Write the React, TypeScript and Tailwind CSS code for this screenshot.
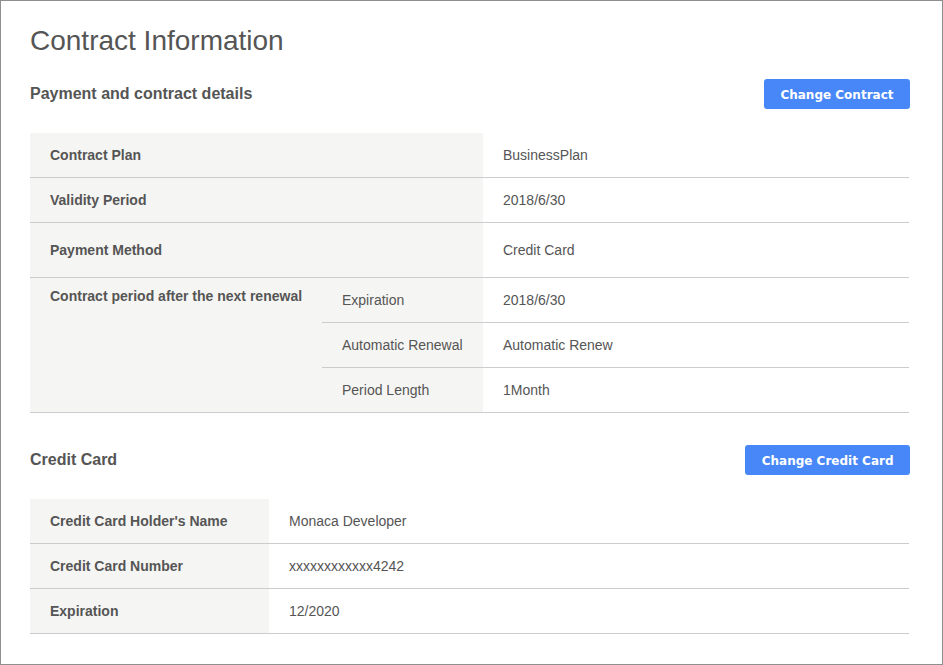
import React from 'react';

interface Item {
  label: string;
  value: string;
  tall?: boolean;
}

const contractRows: Item[] = [
  { label: 'Contract Plan', value: 'BusinessPlan' },
  { label: 'Validity Period', value: '2018/6/30' },
  { label: 'Payment Method', value: 'Credit Card', tall: true },
];

const renewalRows: Item[] = [
  { label: 'Expiration', value: '2018/6/30' },
  { label: 'Automatic Renewal', value: 'Automatic Renew' },
  { label: 'Period Length', value: '1Month' },
];

const cardRows: Item[] = [
  { label: "Credit Card Holder's Name", value: 'Monaca Developer' },
  { label: 'Credit Card Number', value: 'xxxxxxxxxxxx4242' },
  { label: 'Expiration', value: '12/2020' },
];

const SectionHeader: React.FC<{ title: string; action: string }> = ({ title, action }) => (
  <div className="flex items-center justify-between h-[30px]">
    <h2 className="text-[16px] leading-[20px] font-bold text-[#555555]">{title}</h2>
    <button className="h-[30px] px-[16.5px] pt-[2px] rounded-[3px] bg-[#4787f8] text-white text-[12px] font-bold font-['DejaVu_Sans',sans-serif]">
      {action}
    </button>
  </div>
);

const App: React.FC = () => {
  return (
    <div className="h-[665px] w-[943px] border border-[#8e8e8e] bg-white pl-[29px] pr-[32px] pt-[24px] font-['Liberation_Sans',Arial,sans-serif] text-[14px] text-[#555555] overflow-hidden">
      <h1 className="text-[28px] leading-[32px] font-normal text-[#555555]">Contract Information</h1>

      <div className="mt-[22px]">
        <SectionHeader title="Payment and contract details" action="Change Contract" />
      </div>

      {/* contract table */}
      <div className="mt-[24px] mr-[1px]">
        {contractRows.map((row) => (
          <div
            key={row.label}
            className={`flex border-b border-[#cccccc] ${row.tall ? 'h-[55px]' : 'h-[45px]'}`}
          >
            <div className="w-[453px] bg-[#f5f5f3] flex items-center pl-5 font-bold">{row.label}</div>
            <div className="flex-1 flex items-center pl-5">{row.value}</div>
          </div>
        ))}
        <div className="flex border-b border-[#cccccc]">
          <div className="w-[292px] bg-[#f5f5f3] pl-5 pt-2 leading-[20px] font-bold">
            Contract period after the next renewal
          </div>
          <div className="flex-1 flex flex-col">
            {renewalRows.map((row, idx) => (
              <div
                key={row.label}
                className={`flex ${idx < renewalRows.length - 1 ? 'h-[45px] border-b border-[#cccccc]' : 'h-[44px]'}`}
              >
                <div className="w-[161px] bg-[#f5f5f3] flex items-center pl-5">{row.label}</div>
                <div className="flex-1 flex items-center pl-5">{row.value}</div>
              </div>
            ))}
          </div>
        </div>
      </div>

      <div className="mt-[32px]">
        <SectionHeader title="Credit Card" action="Change Credit Card" />
      </div>

      {/* card table */}
      <div className="mt-[24px] mr-[1px]">
        {cardRows.map((row) => (
          <div key={row.label} className="flex h-[45px] border-b border-[#cccccc]">
            <div className="w-[239px] bg-[#f5f5f3] flex items-center pl-5 font-bold">{row.label}</div>
            <div className="flex-1 flex items-center pl-5">{row.value}</div>
          </div>
        ))}
      </div>
    </div>
  );
};

export default App;
